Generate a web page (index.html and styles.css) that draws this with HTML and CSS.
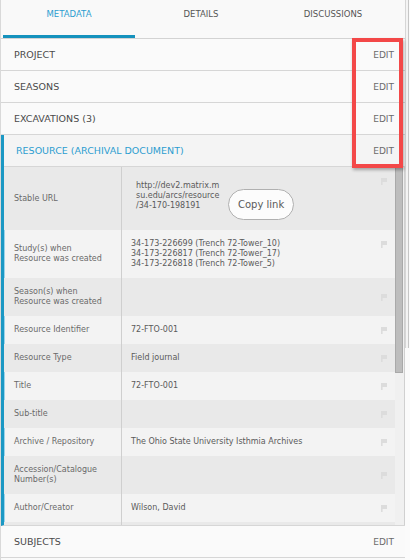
FILE: index.html
```html
<!DOCTYPE html>
<html lang="en">
<head>
<meta charset="utf-8">
<title>Resource metadata</title>
<link rel="stylesheet" href="styles.css">
</head>
<body>
<div class="page">
  <div class="panel">
    <nav class="tabs">
      <a class="tab tab--active">METADATA</a>
      <a class="tab">DETAILS</a>
      <a class="tab">DISCUSSIONS</a>
    </nav>

    <section class="group">
      <div class="group__head"><span>PROJECT</span><a class="group__edit">EDIT</a></div>
    </section>
    <section class="group">
      <div class="group__head"><span>SEASONS</span><a class="group__edit">EDIT</a></div>
    </section>
    <section class="group">
      <div class="group__head"><span>EXCAVATIONS (3)</span><a class="group__edit">EDIT</a></div>
    </section>

    <section class="group group--open">
      <div class="group__head"><span>RESOURCE (ARCHIVAL DOCUMENT)</span><a class="group__edit">EDIT</a></div>
      <div class="group__body">
        <div class="sheet">
          <div class="row row--top">
            <div class="row__label">Stable URL</div>
            <div class="row__value row__value--url">
              <a class="url">http://dev2.matrix.m<br>su.edu/arcs/resource<br>/34-170-198191</a>
              <button class="copy">Copy link</button>
            </div>
            <div class="row__flag"><svg width="6" height="7" viewBox="0 0 6 7"><path d="M0 0h6v4H1.6v3H0z"/></svg></div>
          </div>
          <div class="row row--top">
            <div class="row__label">Study(s) when Resource was created</div>
            <div class="row__value">34-173-226699 (Trench 72-Tower_10)<br>34-173-226817 (Trench 72-Tower_17)<br>34-173-226818 (Trench 72-Tower_5)</div>
            <div class="row__flag"><svg width="6" height="7" viewBox="0 0 6 7"><path d="M0 0h6v4H1.6v3H0z"/></svg></div>
          </div>
          <div class="row">
            <div class="row__label">Season(s) when Resource was created</div>
            <div class="row__value"></div>
            <div class="row__flag"><svg width="6" height="7" viewBox="0 0 6 7"><path d="M0 0h6v4H1.6v3H0z"/></svg></div>
          </div>
          <div class="row">
            <div class="row__label">Resource Identifier</div>
            <div class="row__value">72-FTO-001</div>
            <div class="row__flag"><svg width="6" height="7" viewBox="0 0 6 7"><path d="M0 0h6v4H1.6v3H0z"/></svg></div>
          </div>
          <div class="row">
            <div class="row__label">Resource Type</div>
            <div class="row__value">Field journal</div>
            <div class="row__flag"><svg width="6" height="7" viewBox="0 0 6 7"><path d="M0 0h6v4H1.6v3H0z"/></svg></div>
          </div>
          <div class="row">
            <div class="row__label">Title</div>
            <div class="row__value">72-FTO-001</div>
            <div class="row__flag"><svg width="6" height="7" viewBox="0 0 6 7"><path d="M0 0h6v4H1.6v3H0z"/></svg></div>
          </div>
          <div class="row">
            <div class="row__label">Sub-title</div>
            <div class="row__value"></div>
            <div class="row__flag"><svg width="6" height="7" viewBox="0 0 6 7"><path d="M0 0h6v4H1.6v3H0z"/></svg></div>
          </div>
          <div class="row">
            <div class="row__label">Archive / Repository</div>
            <div class="row__value">The Ohio State University Isthmia Archives</div>
            <div class="row__flag"><svg width="6" height="7" viewBox="0 0 6 7"><path d="M0 0h6v4H1.6v3H0z"/></svg></div>
          </div>
          <div class="row">
            <div class="row__label">Accession/Catalogue Number(s)</div>
            <div class="row__value"></div>
            <div class="row__flag"><svg width="6" height="7" viewBox="0 0 6 7"><path d="M0 0h6v4H1.6v3H0z"/></svg></div>
          </div>
          <div class="row">
            <div class="row__label">Author/Creator</div>
            <div class="row__value">Wilson, David</div>
            <div class="row__flag"><svg width="6" height="7" viewBox="0 0 6 7"><path d="M0 0h6v4H1.6v3H0z"/></svg></div>
          </div>
          <div class="row">
            <div class="row__label">&nbsp;</div>
            <div class="row__value"></div>
            <div class="row__flag"></div>
          </div>
        </div>
        <div class="scrollbar"><div class="scrollbar__thumb"></div></div>
      </div>
    </section>

    <section class="group">
      <div class="group__head"><span>SUBJECTS</span><a class="group__edit">EDIT</a></div>
    </section>

    <div class="callout"></div>
  </div>
  <div class="page-scroll"><div class="page-scroll__thumb"></div></div>
</div>
</body>
</html>
```

FILE: styles.css
```css
html, body {
  margin: 0;
  padding: 0;
}

body {
  font-family: "DejaVu Sans", Verdana, sans-serif;
  background: #ffffff;
  color: #444;
}

.page {
  display: flex;
  height: 560px;
  overflow: hidden;
}

.panel {
  position: relative;
  width: 405px;
  box-sizing: border-box;
  border-left: 1px solid #d9d9d9;
  background: #fafafa;
}

/* tab bar */
.tabs {
  display: flex;
  height: 38px;
  padding-left: 2px;
  border-bottom: 1px solid #d3d3d3;
  background: #f9f9f9;
}

.tab {
  width: 132px;
  box-sizing: border-box;
  padding-top: 9px;
  text-align: center;
  font-size: 8.5px;
  line-height: 10px;
  color: #555;
}

.tab--active {
  color: #2c9dd0;
  box-shadow: inset 0 -3px #1592bd;
}

/* collapsible groups */
.group {
  border-bottom: 1px solid #d6d6d6;
}

.group__head {
  display: flex;
  align-items: center;
  justify-content: space-between;
  height: 31px;
  padding: 0 11px 0 13px;
  font-size: 9.5px;
  color: #4a4a4a;
  background: #fafafa;
}

.group__edit {
  font-size: 9px;
  color: #6a6a6a;
}

.group--open {
  border-left: 3px solid #1b98c4;
}

.group--open .group__head {
  padding-left: 12px;
  background: #f4f4f4;
  color: #2c9dd0;
  border-bottom: 1px solid #d6d6d6;
}

.group__body {
  display: flex;
  height: 358px;
  overflow: hidden;
}

/* field sheet */
.sheet {
  flex: 1;
  overflow: hidden;
}

.row {
  display: grid;
  grid-template-columns: 118px 1fr 20px;
  background: #e9e9e9;
  font-size: 8px;
  line-height: 10px;
}

.row:nth-child(even) {
  background: #f3f3f3;
  box-shadow: inset 1px 0 #9ad3ea;
}

.row__label {
  display: flex;
  align-items: center;
  box-sizing: border-box;
  padding: 9px 12px 9px 10px;
  border-right: 1px solid #cfcfcf;
  color: #6a6a6a;
}

.row__value {
  display: flex;
  align-items: center;
  padding: 9px 6px 9px 9px;
  color: #5a5a5a;
}

.row__value--url {
  align-items: flex-start;
  padding: 14px 0 10px 14px;
}

.url {
  width: 88px;
  white-space: nowrap;
  color: #5a5a5a;
}

.copy {
  margin: 8px 0 0 4px;
  height: 31px;
  padding: 0 9px;
  border: 1px solid #b0b0b0;
  border-radius: 16px;
  background: #fcfcfc;
  font-family: inherit;
  font-size: 10px;
  color: #5a5a5a;
}

.row__flag {
  display: flex;
  align-items: center;
  padding-left: 6px;
}

.row--top .row__flag {
  align-items: flex-start;
  padding-top: 11px;
}

.row__flag svg {
  fill: #dcdcdc;
}

/* inner scrollbar */
.scrollbar {
  width: 10px;
  box-sizing: border-box;
  background: #f0f0f0;
  border-right: 1px solid #d0d0d0;
}

.scrollbar__thumb {
  width: 8px;
  height: 206px;
  box-sizing: border-box;
  background: #bdbdbd;
  border: 1px solid #a9a9a9;
}

/* annotation frame around the edit links */
.callout {
  position: absolute;
  left: 351px;
  top: 38px;
  width: 51px;
  height: 130px;
  box-sizing: border-box;
  border: 4px solid #f34848;
  box-shadow: 1px 2px 3px rgba(0, 0, 0, 0.3);
}

/* page scrollbar */
.page-scroll {
  width: 5px;
  background: #fbfbfb;
}

.page-scroll__thumb {
  width: 4px;
  height: 348px;
  box-sizing: border-box;
  border-left: 1px solid #d6d6d6;
  border-right: 1px solid #c6c6c6;
  background: #f4f4f4;
}
```
